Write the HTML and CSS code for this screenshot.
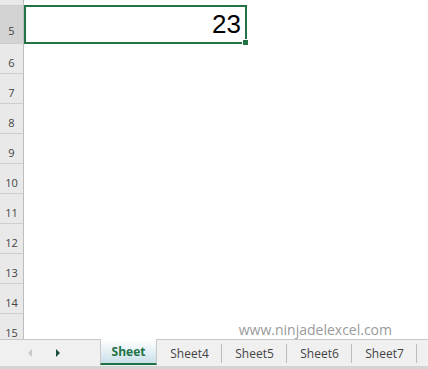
FILE: index.html
```html
<!DOCTYPE html>
<html>
<head>
<meta charset="utf-8">
<link rel="stylesheet" href="styles.css">
</head>
<body>
<div class="app">
  <div class="grid">
    <div class="rows">
      <div class="row"><div class="rh">4</div><div class="cells"></div></div>
      <div class="row row-sel"><div class="rh rh-sel">5</div><div class="cells"><div class="cell-sel"><span class="val">23</span><span class="handle"></span></div></div></div>
      <div class="row"><div class="rh">6</div><div class="cells"></div></div>
      <div class="row"><div class="rh">7</div><div class="cells"></div></div>
      <div class="row"><div class="rh">8</div><div class="cells"></div></div>
      <div class="row"><div class="rh">9</div><div class="cells"></div></div>
      <div class="row"><div class="rh">10</div><div class="cells"></div></div>
      <div class="row"><div class="rh">11</div><div class="cells"></div></div>
      <div class="row"><div class="rh">12</div><div class="cells"></div></div>
      <div class="row"><div class="rh">13</div><div class="cells"></div></div>
      <div class="row"><div class="rh">14</div><div class="cells"></div></div>
      <div class="row"><div class="rh">15</div><div class="cells"></div></div>
    </div>
    <div class="watermark">www.ninjadelexcel.com</div>
  </div>
  <div class="tabbar">
    <div class="nav">
      <svg class="arr" width="6" height="8" viewBox="0 0 6 8"><path d="M5 0 L1 4 L5 8 Z" fill="#c4c8c6"/></svg>
      <svg class="arr" width="6" height="8" viewBox="0 0 6 8"><path d="M1 0 L5 4 L1 8 Z" fill="#1d4d3c"/></svg>
    </div>
    <div class="tab tab-active">Sheet</div>
    <div class="tab">Sheet4</div>
    <div class="tab">Sheet5</div>
    <div class="tab">Sheet6</div>
    <div class="tab">Sheet7</div>
  </div>
</div>
</body>
</html>
```
FILE: styles.css
```css
html, body {
  margin: 0;
  padding: 0;
  background: #ffffff;
}
.app {
  width: 428px;
  height: 369px;
  display: flex;
  flex-direction: column;
  overflow: hidden;
  font-family: "Open Sans", "Noto Sans", sans-serif;
}
.grid {
  position: relative;
  height: 339px;
  overflow: hidden;
  flex: none;
}
.rows {
  margin-top: -24px;
  display: flex;
  flex-direction: column;
}
.row {
  display: flex;
  height: 30px;
  flex: none;
}
.row-sel {
  height: 38px;
}
.rh {
  width: 24px;
  box-sizing: border-box;
  background: #e9e9e9;
  border-right: 1px solid #bdbdbd;
  border-bottom: 1px solid #cdcdcd;
  display: flex;
  align-items: flex-end;
  justify-content: center;
  font-size: 11px;
  line-height: 11px;
  color: #444;
  padding-bottom: 5px;
  flex: none;
}
.rh-sel {
  background: #d3d3d3;
  padding-bottom: 7px;
}
.cells {
  flex: 1;
  display: flex;
}
.cell-sel {
  position: relative;
  box-sizing: border-box;
  width: 223px;
  height: 39px;
  margin-top: -1px;
  border: 2px solid #217346;
  display: flex;
  align-items: flex-end;
  justify-content: flex-end;
  padding: 0 4px 5px 0;
}
.val {
  font-family: "Liberation Sans", Arial, sans-serif;
  font-size: 26px;
  line-height: 26px;
  color: #000;
}
.handle {
  position: absolute;
  right: -4px;
  bottom: -4px;
  width: 5px;
  height: 5px;
  background: #217346;
  border: 1px solid #fff;
}
.watermark {
  position: absolute;
  right: 36px;
  top: 321px;
  font-size: 14px;
  line-height: 17px;
  color: #9a9a9a;
}
.tabbar {
  flex: none;
  height: 26px;
  background: #f0f0f0;
  border-top: 1px solid #c8c8c8;
  border-bottom: 3px solid #d4d4d4;
  display: flex;
  align-items: stretch;
}
.nav {
  width: 100px;
  display: flex;
  align-items: center;
  gap: 22px;
  padding-left: 27px;
  box-sizing: border-box;
}
.arr {
  display: block;
}
.tab {
  width: 65px;
  display: flex;
  align-items: center;
  justify-content: center;
  font-size: 12px;
  color: #444;
  position: relative;
}
.tab::after {
  content: "";
  position: absolute;
  right: 0;
  top: 4px;
  bottom: 3px;
  width: 1px;
  background: #bcbcbc;
}
.tab-active {
  width: 57px;
  margin-top: -1px;
  box-sizing: border-box;
  border-left: 1px solid #c8c8c8;
  border-right: 1px solid #c8c8c8;
  border-bottom: 2px solid #217346;
  background: linear-gradient(#ffffff 0%, #eef5f8 35%, #c9e0ea 100%);
  color: #217346;
  font-weight: bold;
  margin-bottom: 1px;
}
.tab-active::after {
  display: none;
}
```
